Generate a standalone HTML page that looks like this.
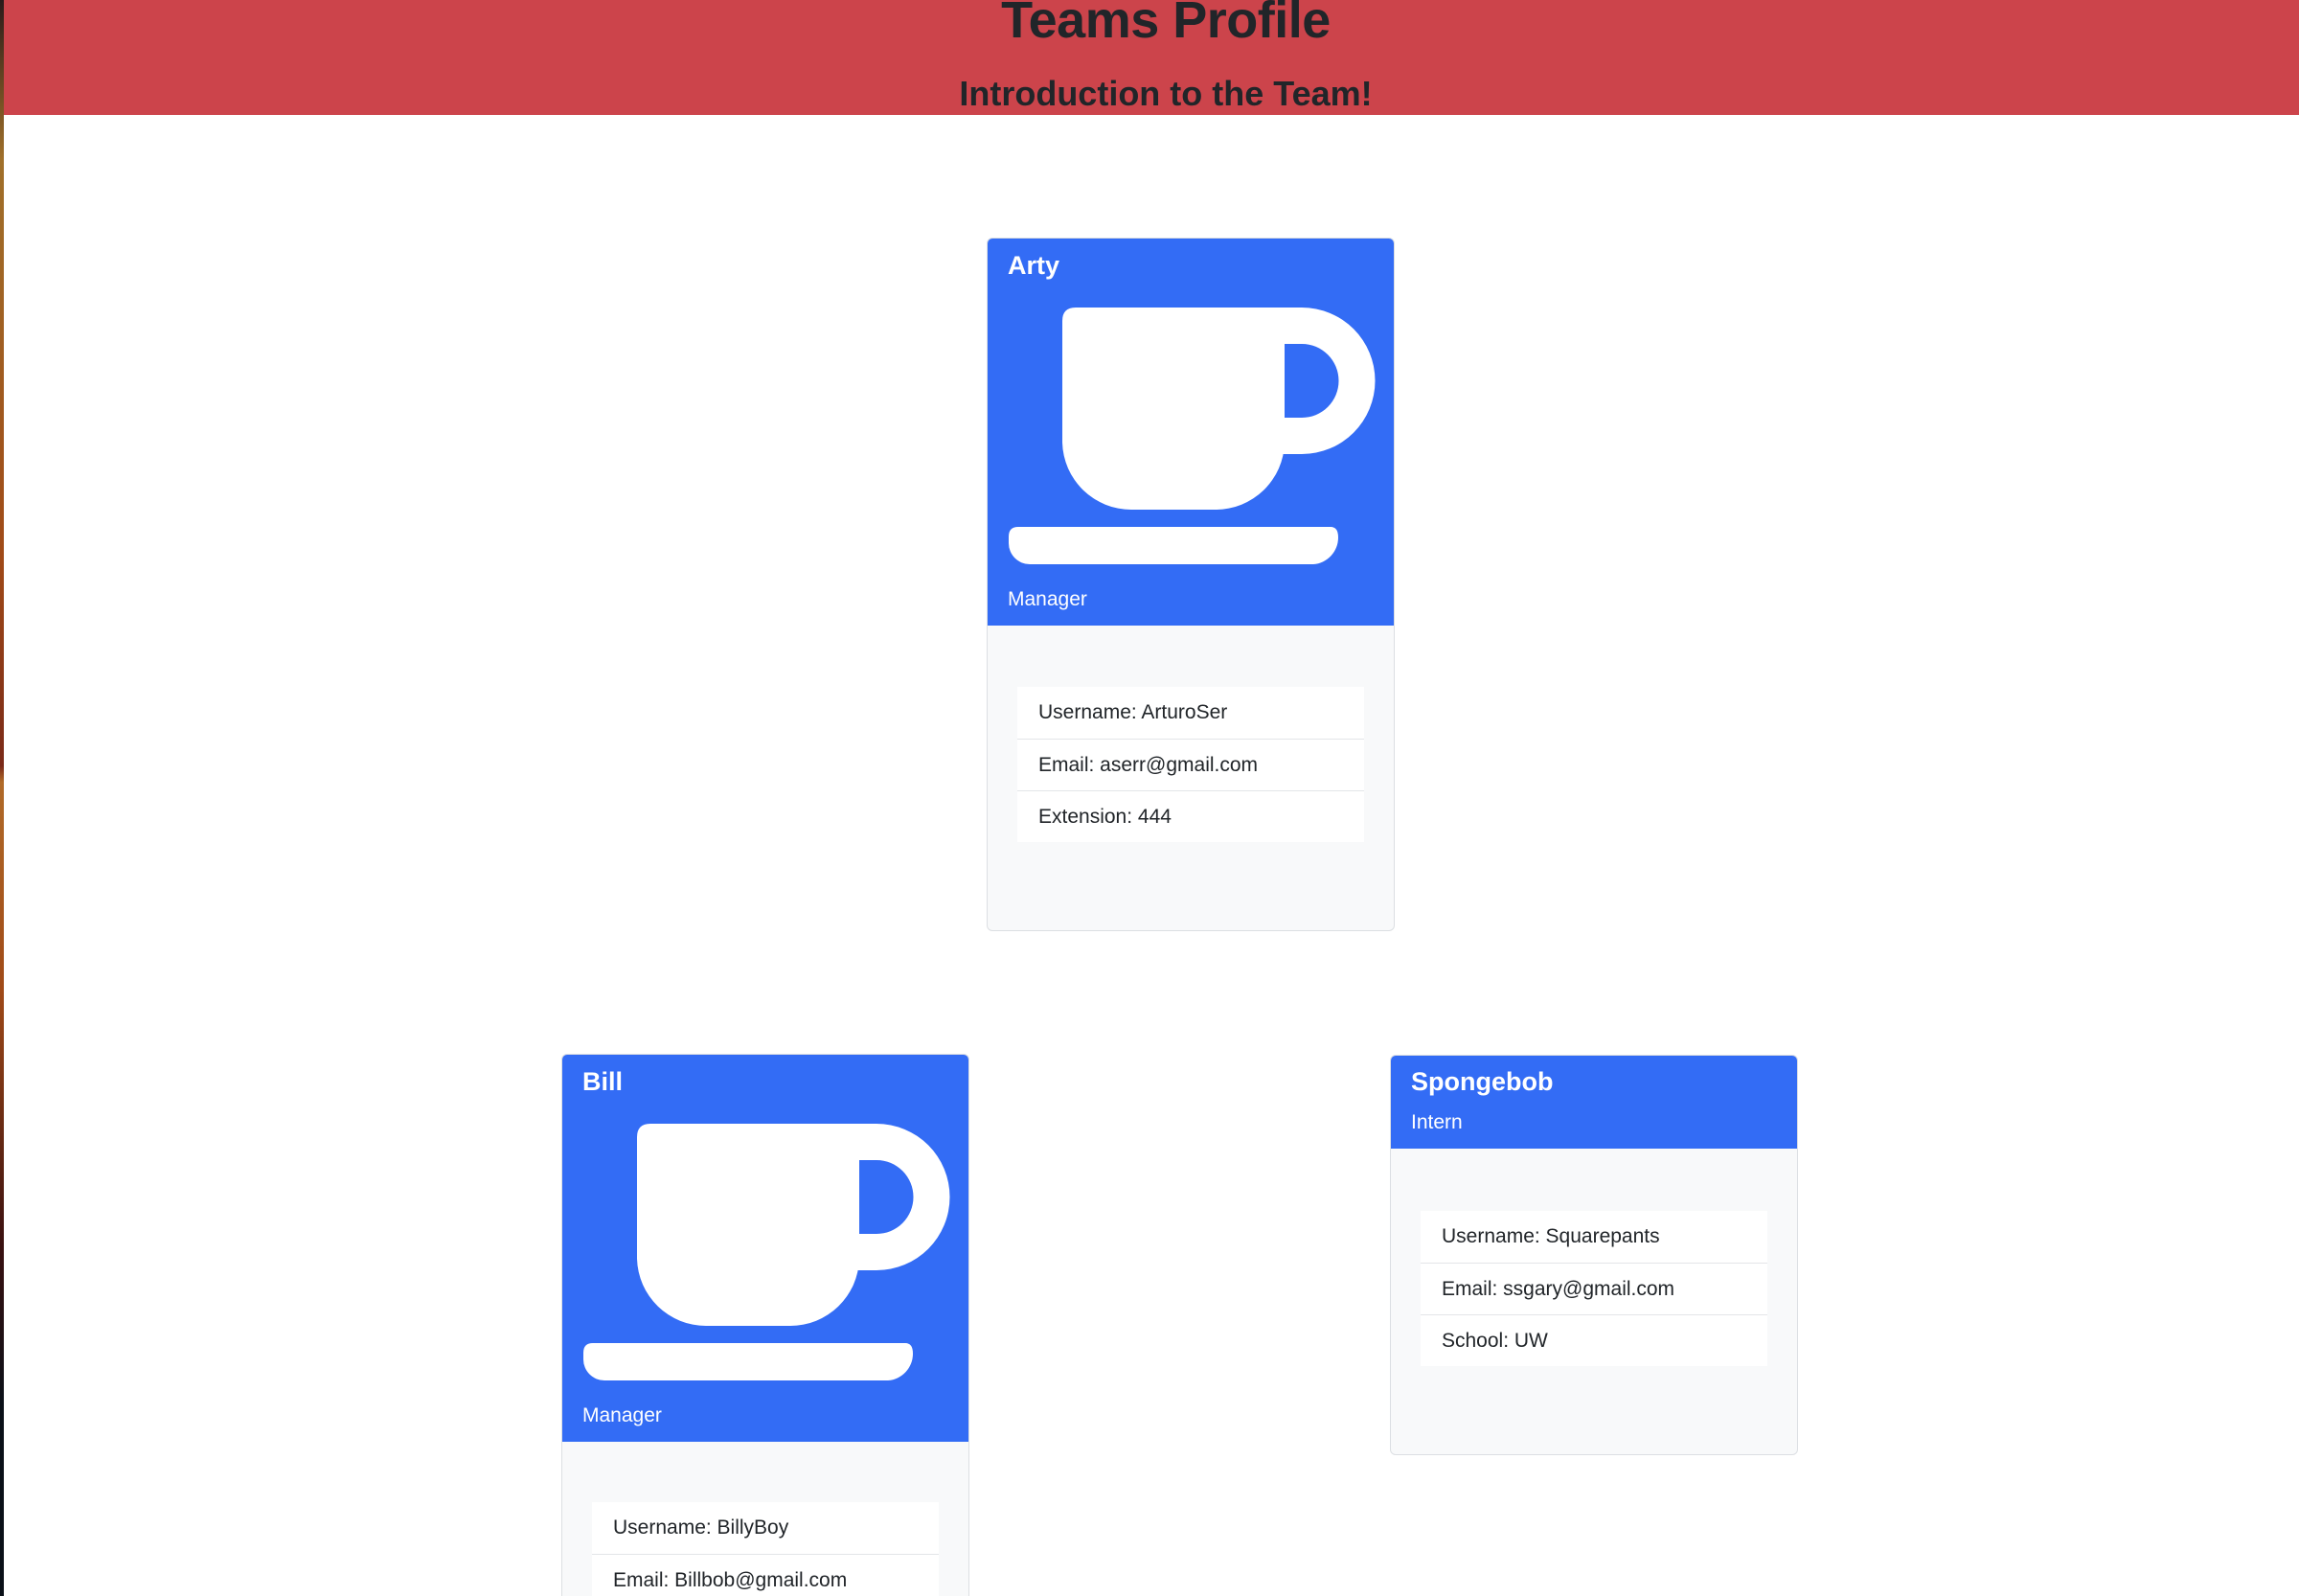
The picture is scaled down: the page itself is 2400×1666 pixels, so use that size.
<!DOCTYPE html>
<html><head><meta charset="utf-8"><style>
*{margin:0;padding:0;box-sizing:border-box}
html,body{width:2400px;height:1666px;overflow:hidden;background:#fff;font-family:"Liberation Sans",Arial,sans-serif;color:#212529;position:relative}
.strip{position:absolute;left:0;top:0;width:4px;height:1666px;background:linear-gradient(#2a1a1a 0%,#a0702a 10%,#a04a18 35%,#7a2a18 48%,#b06a28 49%,#a04a18 62%,#3a1010 78%,#0a1018 88%,#0a1018 100%)}
header{position:absolute;left:4px;top:0;width:2396px;height:120px;background:#cc444b;text-align:center}
h1{position:absolute;left:0;right:0;top:-10px;font-size:54px;font-weight:bold;padding-left:30px;letter-spacing:-0.5px}
h2{position:absolute;left:0;right:0;top:77px;font-size:36px;font-weight:bold;padding-left:30px}
.card{position:absolute;width:426px;background:#f8f9fa;border:1.5px solid #dcdfe3;border-radius:6px;overflow:hidden}
.hd{background:#336cf5;color:#fff;position:relative}
.name{position:absolute;left:21px;top:13px;font-size:27px;font-weight:bold}
.role{position:absolute;left:21px;font-size:21px}
.hd svg{position:absolute;left:0;top:0}
ul{list-style:none;position:absolute;left:31px;width:362px;background:#fff}
li{height:54px;line-height:54px;padding-left:22px;font-size:21px;border-top:1.5px solid #e3e5e8}
li:first-child{border-top:none}
</style></head><body>
<div class="strip"></div>
<header><h1>Teams Profile</h1><h2>Introduction to the Team!</h2></header>

<div class="card" style="left:1030px;top:248px;height:724px">
 <div class="hd" style="height:404px">
  <div class="name">Arty</div>
  <svg width="426" height="404"><g fill="#fff">
   <path d="M78 86 Q78 72 92 72 H310 V213 A72 72 0 0 1 238 283 H150 A72 72 0 0 1 78 213 Z"/>
   <path fill-rule="evenodd" d="M306 72 H328 A76 76 0 0 1 328 225 H306 Z M308 110 H328 A38.5 38.5 0 0 1 328 187 H308 Z"/>
   <path d="M22 311 Q22 301 32 301 H358 Q366 301 366 312 A28 28 0 0 1 340 340 H44 A22 22 0 0 1 22 318 Z"/>
  </g></svg>
  <div class="role" style="top:365px">Manager</div>
 </div>
 <ul style="top:468px"><li>Username: ArturoSer</li><li>Email: aserr@gmail.com</li><li>Extension: 444</li></ul>
</div>

<div class="card" style="left:586px;top:1100px;height:566px;border-bottom:none;border-radius:6px 6px 0 0">
 <div class="hd" style="height:404px">
  <div class="name">Bill</div>
  <svg width="426" height="404"><g fill="#fff">
   <path d="M78 86 Q78 72 92 72 H310 V213 A72 72 0 0 1 238 283 H150 A72 72 0 0 1 78 213 Z"/>
   <path fill-rule="evenodd" d="M306 72 H328 A76 76 0 0 1 328 225 H306 Z M308 110 H328 A38.5 38.5 0 0 1 328 187 H308 Z"/>
   <path d="M22 311 Q22 301 32 301 H358 Q366 301 366 312 A28 28 0 0 1 340 340 H44 A22 22 0 0 1 22 318 Z"/>
  </g></svg>
  <div class="role" style="top:365px">Manager</div>
 </div>
 <ul style="top:467px"><li>Username: BillyBoy</li><li>Email: Billbob@gmail.com</li></ul>
</div>

<div class="card" style="left:1451px;top:1101px;height:418px">
 <div class="hd" style="height:97px">
  <div class="name" style="top:12px">Spongebob</div>
  <div class="role" style="top:58px">Intern</div>
 </div>
 <ul style="top:162px"><li>Username: Squarepants</li><li>Email: ssgary@gmail.com</li><li>School: UW</li></ul>
</div>
</body></html>
